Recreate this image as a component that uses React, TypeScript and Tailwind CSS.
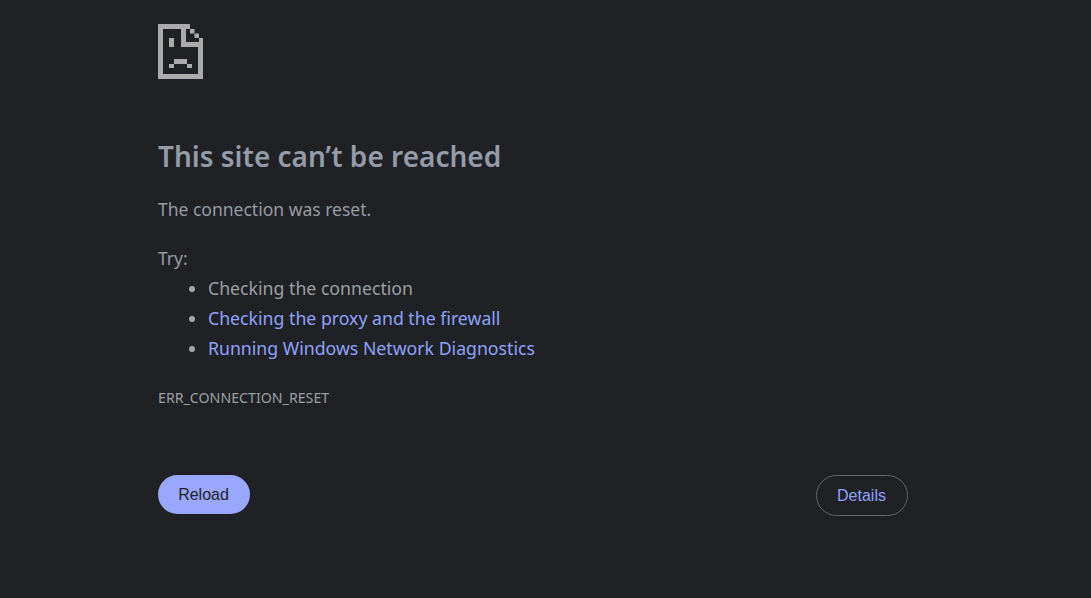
export default function App() {
  return (
    <div className="min-h-[598px] w-full bg-[#202124] font-['Noto_Sans','Open_Sans',sans-serif] text-[#9aa0a6]">
      <div className="ml-[158px] w-[750px] pt-6">
        <svg width="46" height="56" viewBox="0 0 46 56" className="block" fill="#ababab">
          <path d="M0 0H32V5H5V50H40V18H45V55H0Z" />
          <path d="M32 5H36.5V9.5H32ZM36.5 9.5H41V14H36.5ZM41 14H45V18H41ZM23 5H28V18H45V23H23Z" />
          <rect x="11" y="14" width="5" height="9" />
          <path d="M16 35H29V40H16ZM11 40H16V44H11ZM29 40H34V44H29Z" />
        </svg>
        <h1 className="mt-[58px] text-[28px] leading-[36px] font-semibold text-[#939ca8]">This site can’t be reached</h1>
        <p className="mt-[23px] text-[17.5px] leading-6 text-[#959ca4]">The connection was reset.</p>
        <p className="mt-[25px] text-[17.5px] leading-6 text-[#959ca4]">Try:</p>
        <ul className="mt-[3px] list-disc pl-[50px] text-[17.7px] leading-[30px] text-[#9aa0a6] marker:text-[#a6a6a6]">
          <li>Checking the connection</li>
          <li><span className="text-[#8fa3ff]">Checking the proxy and the firewall</span></li>
          <li><span className="text-[#8fa3ff]">Running Windows Network Diagnostics</span></li>
        </ul>
        <p className="mt-[25px] text-[14.2px] leading-5">ERR_CONNECTION_RESET</p>
        <div className="mt-[67px] flex items-start justify-between font-['Liberation_Sans',Arial,sans-serif] text-base">
          <button className="h-[39px] w-[92px] rounded-[20px] bg-[#9aa7ff] pr-px text-[#202124]">Reload</button>
          <button className="h-[41px] w-[92px] rounded-[21px] border border-[#63666b] pr-px text-[#8fa3ff]">Details</button>
        </div>
      </div>
    </div>
  );
}
